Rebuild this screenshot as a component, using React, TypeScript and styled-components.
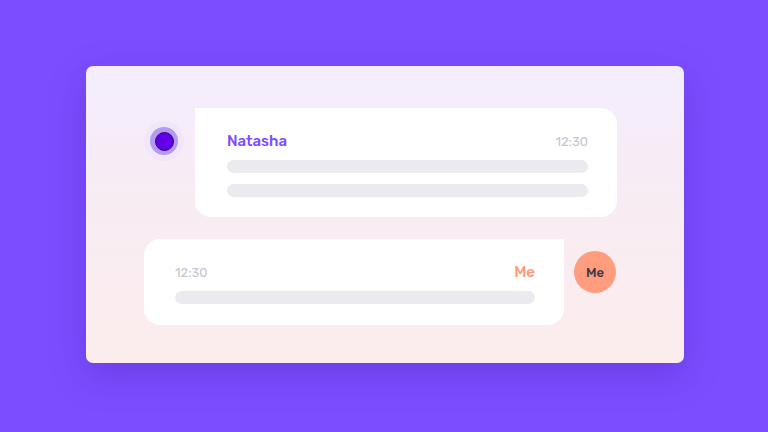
import styled, { createGlobalStyle } from 'styled-components'

const GlobalStyle = createGlobalStyle`
  html, body {
    margin: 0;
    padding: 0;
    background: #7c4dff;
    font-family: Rubik, Inter, "Noto Sans", sans-serif;
  }
`

const Page = styled.div`
  width: 768px;
  height: 432px;
  box-sizing: border-box;
  padding: 66px 0 0 86px;
  background: #7c4dff;
`

const Card = styled.div`
  width: 598px;
  height: 297px;
  box-sizing: border-box;
  padding: 42px 67px 0 58px;
  border-radius: 7px;
  background: linear-gradient(180deg, #f3edfd 0%, #f8ecf4 45%, #fcecec 100%);
  box-shadow: 0 12px 36px rgba(58, 20, 160, 0.28);
  display: flex;
  flex-direction: column;
  gap: 22px;
`

const Row = styled.div<{ $mine?: boolean }>`
  display: flex;
  align-items: flex-start;
  gap: ${(p) => (p.$mine ? '10px' : '11px')};
  margin-right: ${(p) => (p.$mine ? '1px' : '0')};
`

const Bubble = styled.div<{ $mine?: boolean }>`
  flex: 1;
  background: #ffffff;
  border-radius: ${(p) => (p.$mine ? '16px 0 16px 16px' : '0 16px 16px 16px')};
  padding: 23px 29px ${(p) => (p.$mine ? '21px' : '20px')} ${(p) => (p.$mine ? '31px' : '32px')};
  display: flex;
  flex-direction: column;
`

const Header = styled.div<{ $mine?: boolean }>`
  display: flex;
  flex-direction: ${(p) => (p.$mine ? 'row-reverse' : 'row')};
  justify-content: space-between;
  align-items: center;
  height: 20px;
  margin-bottom: 9px;
`

const Name = styled.span<{ $mine?: boolean }>`
  font-size: 15px;
  font-weight: 500;
  color: ${(p) => (p.$mine ? '#ff9a78' : '#7c4dff')};
`

const Time = styled.span`
  font-size: 13px;
  color: #c6c5d0;
`

const Lines = styled.div`
  display: flex;
  flex-direction: column;
  gap: 11px;
`

const Line = styled.div`
  height: 13px;
  border-radius: 7px;
  background: #ebebef;
`

const Halo = styled.div`
  width: 40px;
  height: 40px;
  margin-top: 13px;
  border-radius: 50%;
  background: rgba(210, 190, 255, 0.12);
  display: flex;
  align-items: center;
  justify-content: center;
`

const Ring = styled.div`
  width: 28px;
  height: 28px;
  border-radius: 50%;
  background: #b49af6;
  display: flex;
  align-items: center;
  justify-content: center;
`

const Dot = styled.div`
  width: 17px;
  height: 17px;
  border-radius: 50%;
  background: #6200ea;
  border: 1px solid #2a0a5e;
`

const MeAvatar = styled.div`
  width: 42px;
  height: 42px;
  margin-top: 12px;
  flex-shrink: 0;
  border-radius: 50%;
  background: #ff9d7e;
  color: #3b3645;
  font-size: 13px;
  font-weight: 500;
  display: flex;
  align-items: center;
  justify-content: center;
`

export default function App() {
  return (
    <Page>
      <GlobalStyle />
      <Card>
        <Row>
          <Halo>
            <Ring>
              <Dot />
            </Ring>
          </Halo>
          <Bubble>
            <Header>
              <Name>Natasha</Name>
              <Time>12:30</Time>
            </Header>
            <Lines>
              <Line />
              <Line />
            </Lines>
          </Bubble>
        </Row>
        <Row $mine>
          <Bubble $mine>
            <Header $mine>
              <Name $mine>Me</Name>
              <Time>12:30</Time>
            </Header>
            <Lines>
              <Line />
            </Lines>
          </Bubble>
          <MeAvatar>Me</MeAvatar>
        </Row>
      </Card>
    </Page>
  )
}
